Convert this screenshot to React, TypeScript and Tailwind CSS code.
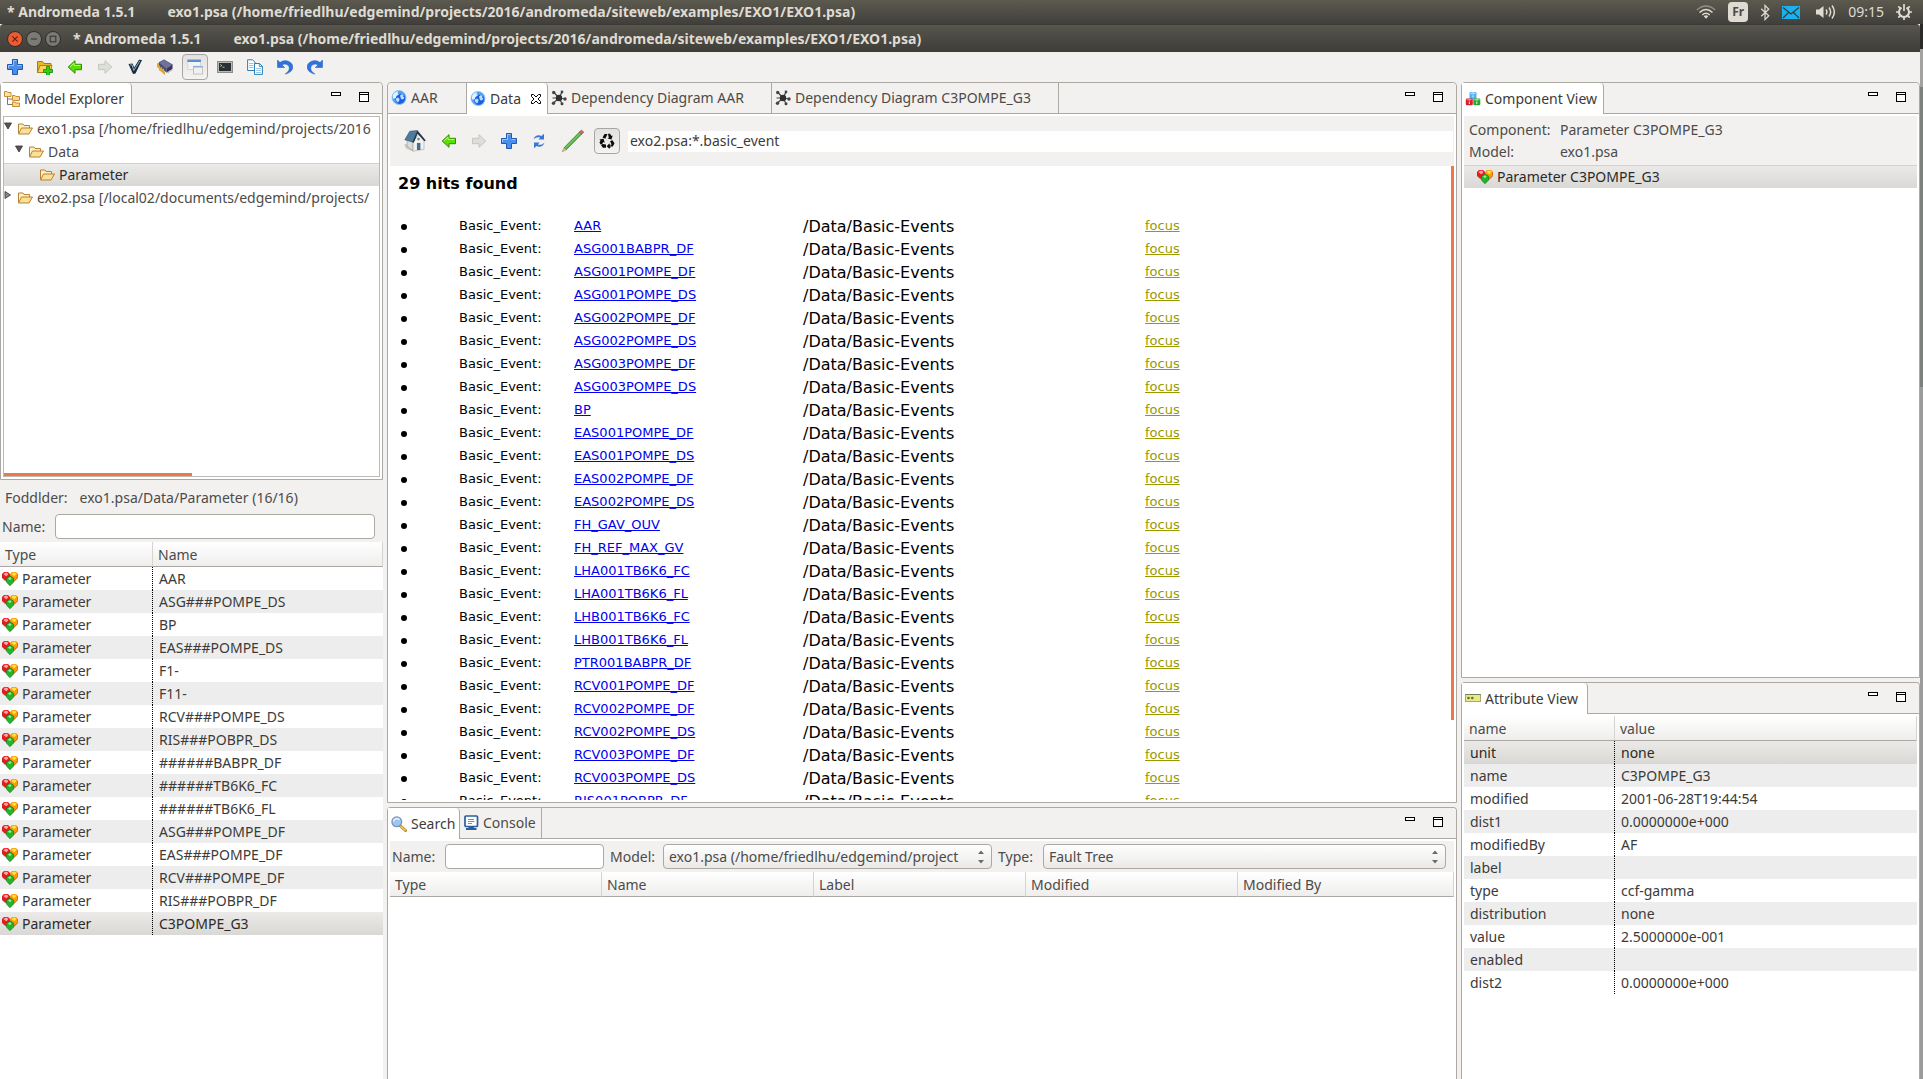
import type { ReactNode } from "react";
import clsx from "clsx";

const TITLE = "exo1.psa (/home/friedlhu/edgemind/projects/2016/andromeda/siteweb/examples/EXO1/EXO1.psa)";

const PARAMETERS = [
  "AAR",
  "ASG###POMPE_DS",
  "BP",
  "EAS###POMPE_DS",
  "F1-",
  "F11-",
  "RCV###POMPE_DS",
  "RIS###POBPR_DS",
  "######BABPR_DF",
  "######TB6K6_FC",
  "######TB6K6_FL",
  "ASG###POMPE_DF",
  "EAS###POMPE_DF",
  "RCV###POMPE_DF",
  "RIS###POBPR_DF",
  "C3POMPE_G3",
];

const HITS = [
  "AAR",
  "ASG001BABPR_DF",
  "ASG001POMPE_DF",
  "ASG001POMPE_DS",
  "ASG002POMPE_DF",
  "ASG002POMPE_DS",
  "ASG003POMPE_DF",
  "ASG003POMPE_DS",
  "BP",
  "EAS001POMPE_DF",
  "EAS001POMPE_DS",
  "EAS002POMPE_DF",
  "EAS002POMPE_DS",
  "FH_GAV_OUV",
  "FH_REF_MAX_GV",
  "LHA001TB6K6_FC",
  "LHA001TB6K6_FL",
  "LHB001TB6K6_FC",
  "LHB001TB6K6_FL",
  "PTR001BABPR_DF",
  "RCV001POMPE_DF",
  "RCV002POMPE_DF",
  "RCV002POMPE_DS",
  "RCV003POMPE_DF",
  "RCV003POMPE_DS",
  "RIS001POBPR_DF",
];

const ATTRIBUTES = [
  ["unit", "none"],
  ["name", "C3POMPE_G3"],
  ["modified", "2001-06-28T19:44:54"],
  ["dist1", "0.0000000e+000"],
  ["modifiedBy", "AF"],
  ["label", ""],
  ["type", "ccf-gamma"],
  ["distribution", "none"],
  ["value", "2.5000000e-001"],
  ["enabled", ""],
  ["dist2", "0.0000000e+000"],
];

const selectedFill = "bg-gradient-to-b from-[#ebeae8] to-[#dad8d5] text-[#2b2a28]";
const selectedRow = clsx("border-t border-[#d3d1ce]", selectedFill);

/* ---------- icons ---------- */

function Svg({ children, size = 16, className }: { children: ReactNode; size?: number; className?: string }) {
  return (
    <svg viewBox="0 0 16 16" width={size} height={size} className={clsx("block shrink-0", className)} aria-hidden>
      {children}
    </svg>
  );
}

function IconPlus() {
  return (
    <Svg>
      <path d="M5.5.5h5v5h5v5h-5v5h-5v-5h-5v-5h5z" fill="#4b8ee8" stroke="#1f57b5" />
      <path d="M6.5 6.5v-5h3M1.5 9V6.5h5M10.5 6.5h4" fill="none" stroke="#9cc4f7" />
    </Svg>
  );
}

function IconFolderPlus() {
  return (
    <Svg>
      <path d="M.5 13.500V2.500h5l1.500 2h7v9z" fill="#e9b62e" stroke="#a87a12" />
      <path d="M.5 13.500l2.500-7h12l-2 7z" fill="#f5d35c" stroke="#b0831a" />
      <path d="M9.500 7.500h3v3h3v3h-3v3h-3v-3h-3v-3h3z" fill="#2fd016" stroke="#128a06" strokeWidth=".8" />
    </Svg>
  );
}

function IconArrow({ disabled, right }: { disabled?: boolean; right?: boolean }) {
  return (
    <Svg className={clsx(right && "-scale-x-100")}>
      <path
        d="M1.200 8L8 1.700v3.600h6.500v5.400H8v3.600z"
        fill={disabled ? "#dcdfd8" : "#58e000"}
        stroke={disabled ? "#c3c7bf" : "#2c8a00"}
      />
      {!disabled && <path d="M3 7.800l4-3.700v2.300h6.500" fill="none" stroke="#b4ff6a" />}
    </Svg>
  );
}

function IconCheck() {
  return (
    <Svg>
      <path d="M1.500 5l4-.5 1.700 4L12 .8l3 .2-6.500 13.500L6 15z" fill="#1c2b38" />
      <path d="M3 5.800l2 .2 1.800 5.500L12.800 2" fill="none" stroke="#7fb3d9" />
    </Svg>
  );
}

function IconChip() {
  return (
    <Svg>
      <path d="M0 4.500l2-1v6l-2-1.500zM2 7l6 6v3l-5.500-5z" fill="#e0a535" />
      <path d="M2 3.500L7 .8l8.500 5-6 4z" fill="#7073a0" stroke="#3d4064" strokeWidth=".6" />
      <path d="M2 3.500v4l7.500 6V9.800z" fill="#484b70" />
      <path d="M9.500 9.800L15.500 5.800v4l-6 4z" fill="#34365a" />
      <path d="M2.500 6.500v5M4.500 8.200v4.800M6.500 9.800v4.800" stroke="#e0a535" strokeWidth="1.300" />
      <path d="M11.200 12.400v1.800M13 11.200v1.800M14.800 10v1.800" stroke="#9d9d9d" strokeWidth="1" />
    </Svg>
  );
}

function IconWindows() {
  return (
    <Svg>
      <rect x=".8" y="1" width="12.700" height="9.500" fill="#f3f4f3" stroke="#ccd0ce" strokeWidth=".8" />
      <rect x=".4" y=".6" width="13.500" height="2.400" fill="#5b8fd0" />
      <rect x="6.500" y="8" width="9" height="7" fill="#f0f1ee" stroke="#b5b9b3" strokeWidth=".8" />
      <path d="M6.200 7.600h9.600" stroke="#8fb0da" strokeWidth="1.400" />
    </Svg>
  );
}

function IconTerminal() {
  return (
    <Svg>
      <rect x=".5" y="2.500" width="15" height="11" fill="#b8b8b4" stroke="#8d8d89" />
      <rect x="2" y="4" width="12" height="8" fill="#2a2f33" />
      <path d="M3.300 5.500l1.500 1-1.500 1M5.500 8.200h2" fill="none" stroke="#e5e5e5" strokeWidth=".8" />
    </Svg>
  );
}

function IconCopy() {
  return (
    <Svg>
      <path d="M.6.8h5L8 3.200v8.300H.6z" fill="#fff" stroke="#2a7fb8" />
      <path d="M2 4.500h4.500M2 6.500h4.500M2 8.500h4.500" stroke="#7fb9dc" strokeWidth=".8" />
      <path d="M7.500 4.500h5l2.900 2.800v8.100H7.500z" fill="#fff" stroke="#2a7fb8" />
      <path d="M12.300 4.500v3h3" fill="none" stroke="#2a7fb8" strokeWidth=".8" />
      <path d="M9 9.500h5M9 11.500h5M9 13.500h5" stroke="#7fb9dc" strokeWidth=".8" />
    </Svg>
  );
}

function IconUndo({ flip }: { flip?: boolean }) {
  return (
    <Svg className={clsx(flip && "-scale-x-100")}>
      <path
        d="M.5 1v7.500h7.200L5 6c2.500-1.800 6-.8 7 1.800.9 2.600-.5 5-3.800 7.200C13.500 14 16 10.800 15.800 7.500 15.500 2.500 7.500-.5 3 3.600z"
        fill="#2f73dd"
        stroke="#1d56b4"
        strokeWidth=".5"
      />
    </Svg>
  );
}

function IconTree() {
  return (
    <Svg>
      <path d="M3.500 6v7.500h5M3.500 8h5" fill="none" stroke="#777" />
      <path d="M.5 5.500v-5h2.500l.8 1H7v4z" fill="#fbe3a2" stroke="#c0832a" strokeWidth=".9" />
      <path d="M8.500 9.500v-5H11l.8 1h3.700v4z" fill="#fbd98a" stroke="#c0832a" strokeWidth=".9" />
      <path d="M8.500 15.500v-4.500H11l.8 1h3.700v3.500z" fill="#fbd98a" stroke="#c0832a" strokeWidth=".9" />
    </Svg>
  );
}

function IconFolder() {
  return (
    <Svg>
      <path d="M1.500 12.500v-9.500h4.500l1 1.500h5.500v3" fill="#fdf0c4" stroke="#b9822f" />
      <path d="M1.500 13l3-6h11l-3.500 6z" fill="#fbe09a" stroke="#b9822f" strokeLinejoin="round" />
    </Svg>
  );
}

function IconGlobe() {
  return (
    <Svg>
      <circle cx="8" cy="7.500" r="7" fill="#4ea0f5" />
      <circle cx="9.500" cy="9" r="5.200" fill="#1a5fe0" />
      <path
        d="M1.800 5c.8-2 3-3.700 5.500-3.800L6.500 3l1.300 1.500L5.500 6l-.8 2.200L2 8.500z"
        fill="#e3f2ff"
      />
      <path d="M5 8.500l2-1 1.500 1.300-.3 2.200-1.400 1.500L5 10.500zM9 5.500l2-1.500 1.500 1-.5 1.500 1.500 1-1.500 2-2-.5z" fill="#b9dcff" />
      <circle cx="8" cy="7.500" r="7" fill="none" stroke="#8cc1f8" strokeWidth=".9" />
    </Svg>
  );
}

function IconGraph() {
  return (
    <Svg>
      <path d="M8 8L3 2.500M8 8l3-6M8 8l6 1M8 8l-5.500 5M8 8l3 5.500M8 8L1.500 8" stroke="#444" strokeWidth="1.200" />
      <circle cx="8" cy="8" r="3.200" fill="#2f2f2f" />
      <circle cx="2.700" cy="2.500" r="1.700" fill="#444" />
      <circle cx="11" cy="2" r="1.400" fill="#444" />
      <circle cx="14" cy="9" r="1.700" fill="#444" />
      <circle cx="2.500" cy="13.300" r="1.700" fill="#444" />
      <circle cx="11" cy="13.700" r="1.500" fill="#444" />
    </Svg>
  );
}

function IconClose() {
  return (
    <svg viewBox="0 0 10 10" width="10" height="10" className="block shrink-0" aria-hidden>
      <path
        d="M.5.5h2L5 3 7.500.500h2v2L7 5l2.500 2.500v2h-2L5 7 2.500 9.500h-2v-2L3 5 .5 2.500z"
        fill="#fff"
        stroke="#000"
      />
    </svg>
  );
}

function IconMaximize() {
  return (
    <svg viewBox="0 0 10 10" width="10" height="10" className="block" aria-hidden>
      <rect x=".5" y=".5" width="9" height="9" fill="#fff" stroke="#000" />
      <path d="M1 2.500h8" stroke="#000" />
    </svg>
  );
}

function IconHome() {
  return (
    <Svg size={24}>
      <path d="M.8 10.500l3-1.500 4 5.500-1 .5L2 13z" fill="#c9c9c4" />
      <path d="M2.700 7l4 1.500V14.500l-4-3z" fill="#dcdcd8" stroke="#8b8b86" strokeWidth=".3" />
      <path d="M6.700 8.500L10.700 3.500 14 8v5.500L6.700 14.800z" fill="#f2f2ef" stroke="#8b8b86" strokeWidth=".3" />
      <path d="M4.500 1.500L9.700 1 6.800 8.800 1.200 7.200z" fill="#4e7a9c" stroke="#34566f" strokeWidth=".4" />
      <path d="M9.700 1l5.500 6.700-.9.500-4.600-5-2.500 6-.9-.5z" fill="#23333f" />
      <rect x="9.300" y="9.300" width="2.300" height="4.700" fill="#3b6f95" />
      <circle cx="10.300" cy="6.700" r=".9" fill="#6d8b9d" />
    </Svg>
  );
}

function IconRefresh() {
  return (
    <Svg>
      <path d="M2.500 6.500C3.500 2.500 7.500 1.500 10.500 3L13 .8V6.500H7.500L9.200 4.600C6.800 3.700 4.500 4.300 2.500 6.500z" fill="#3a76d6" />
      <path d="M13.500 9.500c-1 4-5 5-8 3.500L3 15.200V9.500h5.500l-1.700 1.900c2.400.9 4.700.3 6.700-1.900z" fill="#3a76d6" />
    </Svg>
  );
}

function IconPencil() {
  return (
    <Svg size={24}>
      <path d="M2 12.500L12.500 1.800l1.500 1.400L3.500 13.800z" fill="#4fae3d" stroke="#2c6e20" strokeWidth=".4" />
      <path d="M2.700 13L13.200 2.500" stroke="#a3e58d" strokeWidth=".5" />
      <path d="M12.200 2.100L13.600.6l1.700 1.500-1.400 1.400z" fill="#d9606a" stroke="#9c3a42" strokeWidth=".3" />
      <path d="M2 12.500L.8 15.200l2.700-1.400z" fill="#e8cf95" stroke="#7a6432" strokeWidth=".3" />
    </Svg>
  );
}

function IconRecycle() {
  return (
    <Svg>
      <path d="M3.500 4.500L5.500 1h3L6.300 5.800z" fill="#0b0b0b" />
      <path d="M9 .8h2l1.500 2.300 1.200-.6L12.500 6.500 8.500 5.500l1.300-.8z" fill="#0b0b0b" />
      <path d="M13.200 7l2.300 3.200-1.700 3.300h-2.200L12.500 11 11 8.400z" fill="#0b0b0b" />
      <path d="M10.500 10.300v1.200h1v3.200h-1V16L7.700 13.200z" fill="#0b0b0b" />
      <path d="M7 11.500v3.300H3.800L2 12l1.500-1z" fill="#0b0b0b" />
      <path d="M.3 6.500L4.500 5.800l1.300 3.900-1.300-.6L3.300 10.800l-1.800.7L.5 9.600l1-2.200z" fill="#0b0b0b" />
    </Svg>
  );
}

/* three glossy gems that form a heart */
function Heart() {
  return (
    <Svg>
      <path d="M0 3L2 1h4l2 2v4L5 10 3 9.500 0 6.500z" fill="#f0181f" />
      <path d="M8 3l2-2h4l2 2v3.500L12 10.500 8 7.500z" fill="#ff9a0a" />
      <path d="M0 6.500L3 9.500M0 3v3.500M16 3v3.500L12 10.500" fill="none" stroke="#8c3a10" strokeWidth=".7" />
      <path d="M4.300 7.300L8 4.800l3.700 2.500v3.700L8 14.700 4.300 11z" fill="#22b52a" stroke="#14661a" strokeWidth=".6" />
      <path d="M1.500 3.200L3 1.800h2.300L6.300 3.500 4.300 5.300z" fill="#ffa3a3" />
      <path d="M9.700 3l1.200-1.300h2.400l1 1.500-2 2z" fill="#ffe63c" />
      <path d="M6 7.500l2-1.300 1.600 1L8 9.300z" fill="#94f394" />
    </Svg>
  );
}

function IconSearch() {
  return (
    <Svg>
      <path d="M9.500 10l5 4.500" stroke="#a8741c" strokeWidth="3" strokeLinecap="round" />
      <path d="M9.800 10.300l4.600 4" stroke="#f5c65a" strokeWidth="1.700" strokeLinecap="round" />
      <circle cx="5.800" cy="5.800" r="4.900" fill="#9cc6f0" stroke="#7d8fb8" strokeWidth="1.200" />
      <path d="M2.500 5.500a3.400 3.400 0 016-1.700" fill="none" stroke="#e8f4ff" strokeWidth="1.500" />
    </Svg>
  );
}

function IconConsole() {
  return (
    <Svg>
      <rect x="2" y="1" width="12.500" height="10.500" rx="1" fill="#fff" stroke="#2b5c9e" strokeWidth="1.700" />
      <path d="M5 4.500h6M5 6.500h6.500M5 8.500h4" stroke="#6383ad" strokeWidth=".9" />
      <path d="M6 12h4.500l1 1h2v2H3v-2h2z" fill="#2b5c9e" />
    </Svg>
  );
}

function IconBlocks() {
  return (
    <Svg>
      <rect x="4.500" y="1" width="7" height="7" rx="1.200" fill="#55aef0" />
      <path d="M4.500 2.500L8 1l3.500 1.500L8 3.500z" fill="#a8daff" />
      <rect x=".8" y="7.500" width="7" height="6.800" rx="1.200" fill="#d81e2c" />
      <path d="M.8 8.700l3.500-1.200 3.500 1.200-3.500 1z" fill="#f27c84" />
      <rect x="8.300" y="7.500" width="7" height="6.800" rx="1.200" fill="#2aa52e" />
      <path d="M8.300 8.700l3.500-1.200 3.500 1.200-3.500 1z" fill="#8ade8c" />
      <path d="M4.300 10.500v2.500M11.800 10.500v2.500M8 4.300v2" stroke="#fff" strokeWidth=".9" />
    </Svg>
  );
}

function IconAttribute() {
  return (
    <Svg>
      <rect x=".5" y="3.500" width="15" height="7" fill="#e9e98a" stroke="#a8a86a" />
      <path d="M.5 3.500h15" stroke="#6f7f5a" />
      <circle cx="3.500" cy="7" r="1.300" fill="#6b6b35" />
      <circle cx="7.300" cy="7" r="1.300" fill="#6b6b35" />
    </Svg>
  );
}

/* ---------- desktop chrome ---------- */

function Indicators() {
  return (
    <div className="flex items-center">
      <svg viewBox="0 0 20 14" width="20" height="14" className="mr-3" aria-hidden>
        <g fill="none" stroke="#dfdbd2" strokeWidth="1.600">
          <path d="M.8 5Q10-3 19.200 5" opacity=".45" />
          <path d="M3.500 7.500Q10 1.500 16.500 7.500" />
          <path d="M6.300 10Q10 6.500 13.700 10" />
        </g>
        <path d="M7.800 11.200Q10 9.500 12.200 11.200L10 13.700z" fill="#dfdbd2" />
      </svg>
      <span className="mr-3 flex h-5 w-5 items-center justify-center rounded-sm bg-[#dfdbd2] text-xs font-bold text-[#4b4a45]">
        Fr
      </span>
      <svg viewBox="0 0 10 18" width="10" height="17" className="mr-3" aria-hidden>
        <path d="M1 5l8 7.500L5 16.500v-15L9 5.500 1 13" fill="none" stroke="#dfdbd2" strokeWidth="1.300" />
      </svg>
      <svg viewBox="0 0 18 13" width="18" height="13" className="mr-4" aria-hidden>
        <rect width="18" height="13" fill="#19b1ee" />
        <path d="M1 1.500l8 6.500 8-6.500M1 12l5.500-5.500M17 12l-5.500-5.500" fill="none" stroke="#3c3b37" strokeWidth="1.200" />
      </svg>
      <svg viewBox="0 0 20 16" width="20" height="16" className="mr-3" aria-hidden>
        <path d="M0 5.500h3L7.500 2v12L3 10.500H0z" fill="#dfdbd2" />
        <path d="M10 5.500q1.800 2.500 0 5M13 3.500q3.300 4.500 0 9M16 1.500q4.800 6.500 0 13" fill="none" stroke="#dfdbd2" strokeWidth="1.500" />
      </svg>
      <span className="mr-3 text-sm text-[#dfdbd2]">09:15</span>
      <svg viewBox="0 0 16 16" width="16" height="16" aria-hidden>
        <path d="M5.500 3.700a5 5 0 105 0" fill="none" stroke="#dfdbd2" strokeWidth="2" />
        <path
          d="M8 0v7M0 8h3M13 8h3M8 13v3M2.300 2.300l2 2M13.700 2.300l-2 2M2.300 13.700l2-2M13.700 13.700l-2-2"
          stroke="#dfdbd2"
          strokeWidth="1.700"
        />
      </svg>
    </div>
  );
}

function WindowTitle() {
  return (
    <div className="flex gap-8 text-sm font-bold whitespace-nowrap text-[#dfdbd2]">
      <span>* Andromeda 1.5.1</span>
      <span>{TITLE}</span>
    </div>
  );
}

function TopPanel() {
  return (
    <div className="flex h-6 shrink-0 items-center justify-between bg-gradient-to-b from-[#5c5a4f] to-[#403f3b] pr-[11px] pl-[7px]">
      <WindowTitle />
      <Indicators />
    </div>
  );
}

function TitleBar() {
  return (
    <div className="flex h-7 shrink-0 items-center gap-3 rounded-t border-t border-[#3a3934] bg-gradient-to-b from-[#57554c] to-[#3e3d39] pl-[7px]">
      <div className="flex gap-[3px]">
        <button aria-label="Close" className="h-4 w-4 rounded-full border border-[#2f2e2b] bg-[#ec5a32]">
          <Svg size={14}>
            <path d="M5 5l6 6M11 5l-6 6" stroke="#5c2413" strokeWidth="1.300" />
          </Svg>
        </button>
        <button aria-label="Minimize" className="h-4 w-4 rounded-full border border-[#2f2e2b] bg-[#7b7a73]">
          <Svg size={14}>
            <path d="M4.500 8h7" stroke="#3a3935" strokeWidth="1.300" />
          </Svg>
        </button>
        <button aria-label="Maximize" className="h-4 w-4 rounded-full border border-[#2f2e2b] bg-[#7b7a73]">
          <Svg size={14}>
            <rect x="4.800" y="4.800" width="6.400" height="6.400" fill="none" stroke="#3a3935" strokeWidth="1.300" />
          </Svg>
        </button>
      </div>
      <WindowTitle />
    </div>
  );
}

function ToolButton({ label, pressed, children }: { label: string; pressed?: boolean; children: ReactNode }) {
  return (
    <button
      aria-label={label}
      className={clsx(
        "flex h-[26px] w-[26px] shrink-0 items-center justify-center rounded",
        pressed && "border border-[#a9a6a1] bg-gradient-to-b from-[#e3e1df] to-[#f4f3f2]",
      )}
    >
      {children}
    </button>
  );
}

function MainToolbar() {
  return (
    <div className="flex h-[30px] shrink-0 items-center gap-1 pl-[2px]">
      <ToolButton label="New"><IconPlus /></ToolButton>
      <ToolButton label="Add project"><IconFolderPlus /></ToolButton>
      <ToolButton label="Back"><IconArrow /></ToolButton>
      <ToolButton label="Forward"><IconArrow right disabled /></ToolButton>
      <ToolButton label="Validate"><IconCheck /></ToolButton>
      <ToolButton label="Compute"><IconChip /></ToolButton>
      <ToolButton label="Windows" pressed><IconWindows /></ToolButton>
      <ToolButton label="Terminal"><IconTerminal /></ToolButton>
      <ToolButton label="Copy"><IconCopy /></ToolButton>
      <ToolButton label="Undo"><IconUndo /></ToolButton>
      <ToolButton label="Redo"><IconUndo flip /></ToolButton>
    </div>
  );
}

/* ---------- panes ---------- */

type TabProps = { icon: ReactNode; label: string; active?: boolean; closable?: boolean; className?: string };

function Tab({ icon, label, active, closable, className }: TabProps) {
  return (
    <button
      className={clsx(
        "flex shrink-0 items-center gap-1 border-r border-[#aca9a4] pl-[3px] whitespace-nowrap",
        active ? "rounded-tr bg-white text-[#3c3b39]" : "border-b",
        className,
      )}
    >
      {icon}
      <span>{label}</span>
      {closable && (
        <span className="ml-auto pr-[6px]">
          <IconClose />
        </span>
      )}
    </button>
  );
}

function Pane({ tabs, className, children }: { tabs: TabProps[]; className?: string; children: ReactNode }) {
  return (
    <section className={clsx("flex min-h-0 flex-col rounded-t border border-[#aca9a4] bg-white", className)}>
      <div className="flex h-[31px] shrink-0 rounded-t bg-[#f2f1f0]">
        {tabs.map((tab) => (
          <Tab key={tab.label} {...tab} />
        ))}
        <div className="flex flex-1 items-start justify-end gap-[18px] border-b border-[#aca9a4] pt-[9px] pr-[13px]">
          <button aria-label="Minimize" className="h-1 w-[10px] border border-black bg-white" />
          <button aria-label="Maximize">
            <IconMaximize />
          </button>
        </div>
      </div>
      <div className="flex min-h-0 flex-1 flex-col p-[2px]">{children}</div>
    </section>
  );
}

function Th({ children, className }: { children: ReactNode; className?: string }) {
  return (
    <th
      className={clsx(
        "h-[25px] border-r border-b border-r-[#d6d3d0] border-b-[#aca9a4] bg-gradient-to-b from-white to-[#efeeed] p-0 pt-px pl-[5px] text-left font-normal",
        className,
      )}
    >
      {children}
    </th>
  );
}

function TreeRow({
  label,
  className,
  arrow,
  selected,
}: {
  label: string;
  className?: string;
  arrow?: "open" | "closed";
  selected?: boolean;
}) {
  return (
    <li className={clsx("flex h-[23px] items-center whitespace-nowrap", className, selected && selectedRow)}>
      <svg viewBox="0 0 8 8" width="8" height="8" className="mt-[5px] mr-[5px] block shrink-0 self-start" aria-hidden>
        {arrow === "open" && <path d="M.5 1h7L4 7z" fill="#555" stroke="#333" strokeWidth=".8" />}
        {arrow === "closed" && <path d="M1 .5v7L6.500 4z" fill="#888" stroke="#333" strokeWidth=".8" />}
      </svg>
      <IconFolder />
      <span className="pl-1">{label}</span>
    </li>
  );
}

function ModelExplorer() {
  return (
    <Pane className="flex-1" tabs={[{ icon: <IconTree />, label: "Model Explorer", active: true, className: "w-[131px]" }]}>
      <div className="relative flex-1 overflow-hidden border border-[#bdbab6]">
        <ul>
          <TreeRow label="exo1.psa [/home/friedlhu/edgemind/projects/2016" arrow="open" />
          <TreeRow label="Data" arrow="open" className="pl-[11px]" />
          <TreeRow label="Parameter" selected className="pl-[22px]" />
          <TreeRow label="exo2.psa [/local02/documents/edgemind/projects/" arrow="closed" />
        </ul>
        <div className="absolute bottom-0 left-0 h-[3px] w-1/2 bg-[#ef7748]" />
      </div>
    </Pane>
  );
}

function ParameterList() {
  return (
    <div className="flex h-[599px] shrink-0 flex-col">
      <p className="h-[34px] pt-2 pl-[5px]">
        Foddlder:<span className="pl-3">exo1.psa/Data/Parameter (16/16)</span>
      </p>
      <div className="flex h-[25px] items-center pr-2">
        <label htmlFor="parameter-name" className="w-[55px] shrink-0 pl-[2px]">Name:</label>
        <input id="parameter-name" className="h-[25px] min-w-0 flex-1 rounded border border-[#aca9a4] bg-white px-2" />
      </div>
      <div className="mt-[3px] flex-1 bg-white">
        <table className="w-full table-fixed border-separate border-spacing-0">
          <thead>
            <tr>
              <Th className="w-[153px]">Type</Th>
              <Th>Name</Th>
            </tr>
          </thead>
          <tbody className="text-[#3c3b39]">
            {PARAMETERS.map((name, i) => {
              const last = i === PARAMETERS.length - 1;
              return (
                <tr key={name} className={clsx(last ? selectedFill : i % 2 === 1 && "bg-[#ededed]")}>
                  <td className="h-[23px] border-r border-dotted border-black p-0 pl-[2px]">
                    <div className="flex items-center gap-1">
                      <Heart />
                      Parameter
                    </div>
                  </td>
                  <td className="h-[23px] p-0 pl-[6px]">{name}</td>
                </tr>
              );
            })}
          </tbody>
        </table>
      </div>
    </div>
  );
}

function BrowserToolbar() {
  return (
    <div className="flex h-[50px] shrink-0 items-center gap-2 bg-[#f2f1f0] pr-px pl-3">
      <ToolButton label="Home"><IconHome /></ToolButton>
      <div className="flex gap-1">
        <ToolButton label="Back"><IconArrow /></ToolButton>
        <ToolButton label="Forward"><IconArrow right disabled /></ToolButton>
        <ToolButton label="Add"><IconPlus /></ToolButton>
        <ToolButton label="Refresh"><IconRefresh /></ToolButton>
      </div>
      <ToolButton label="Edit"><IconPencil /></ToolButton>
      <ToolButton label="Recycle" pressed><IconRecycle /></ToolButton>
      <input
        aria-label="Query"
        defaultValue="exo2.psa:*.basic_event"
        className="h-[21px] min-w-0 flex-1 bg-white pb-[2px] pl-[2px] text-[#3c3b39]"
      />
    </div>
  );
}

function HitList() {
  return (
    <div className="relative min-h-0 flex-1 overflow-hidden pl-2 font-['DejaVu_Sans',sans-serif] text-black">
      <h1 className="pt-[6px] text-base font-bold">29 hits found</h1>
      <table className="mt-[19px] w-full table-fixed border-separate border-spacing-0 text-[13px]">
        <tbody>
          {HITS.map((hit) => (
            <tr key={hit}>
              <td className="h-[23px] w-[61px] p-0 pl-[3px]">
                <span className="block h-[6px] w-[6px] rounded-full bg-black" />
              </td>
              <td className="w-[115px] p-0">Basic_Event:</td>
              <td className="w-[229px] p-0">
                <a href="#hit" className="text-[#0000ee] underline">{hit}</a>
              </td>
              <td className="w-[342px] p-0 text-base leading-5">/Data/Basic-Events</td>
              <td className="p-0">
                <a href="#focus" className="text-[#999900] underline">focus</a>
              </td>
            </tr>
          ))}
        </tbody>
      </table>
      <div className="absolute top-0 right-0 h-[554px] w-[3px] bg-[#ef7748]" />
    </div>
  );
}

function Combo({ id, value, className }: { id: string; value: string; className: string }) {
  return (
    <div className={clsx("relative", className)}>
      <select
        id={id}
        className="block h-[25px] w-full appearance-none rounded border border-[#aca9a4] bg-gradient-to-b from-white to-[#eae9e7] pr-5 pl-[5px]"
      >
        <option>{value}</option>
      </select>
      <svg viewBox="0 0 6 14" width="6" height="14" className="pointer-events-none absolute top-[6px] right-2" aria-hidden>
        <path d="M0 4l3-3.500L6 4zM0 10l3 3.500L6 10z" fill="#6d6b68" />
      </svg>
    </div>
  );
}

function SearchPane() {
  return (
    <Pane
      className="h-[272px] shrink-0 border-b-0"
      tabs={[
        { icon: <IconSearch />, label: "Search", active: true, className: "w-[72px]" },
        { icon: <IconConsole />, label: "Console", className: "w-[82px]" },
      ]}
    >
      <div className="flex h-[31px] shrink-0 items-center bg-[#f2f1f0] pr-2 pl-[2px]">
        <label htmlFor="search-name" className="w-[53px]">Name:</label>
        <input id="search-name" className="h-[25px] w-[159px] rounded border border-[#aca9a4] bg-white px-2" />
        <label htmlFor="search-model" className="w-[59px] pl-[6px]">Model:</label>
        <Combo id="search-model" value="exo1.psa (/home/friedlhu/edgemind/project" className="w-[329px]" />
        <label htmlFor="search-type" className="w-[51px] pl-[6px]">Type:</label>
        <Combo id="search-type" value="Fault Tree" className="flex-1" />
      </div>
      <table className="w-full table-fixed border-separate border-spacing-0">
        <thead>
          <tr>
            <Th className="w-[212px]">Type</Th>
            <Th className="w-[212px]">Name</Th>
            <Th className="w-[212px]">Label</Th>
            <Th className="w-[212px]">Modified</Th>
            <Th>Modified By</Th>
          </tr>
        </thead>
      </table>
    </Pane>
  );
}

function ComponentView() {
  return (
    <Pane className="flex-1" tabs={[{ icon: <IconBlocks />, label: "Component View", active: true, className: "w-[142px]" }]}>
      <dl className="grid h-[49px] shrink-0 grid-cols-[91px_1fr] content-center gap-y-[2px] bg-[#f2f1f0] pl-[5px]">
        <dt>Component:</dt>
        <dd>Parameter C3POMPE_G3</dd>
        <dt>Model:</dt>
        <dd>exo1.psa</dd>
      </dl>
      <div className={clsx("flex h-[23px] shrink-0 items-center gap-1 pl-[13px]", selectedRow)}>
        <Heart />
        Parameter C3POMPE_G3
      </div>
    </Pane>
  );
}

function AttributeView() {
  return (
    <Pane
      className="h-[397px] shrink-0 border-b-0"
      tabs={[{ icon: <IconAttribute />, label: "Attribute View", active: true, className: "w-[126px]" }]}
    >
      <table className="w-full table-fixed border-separate border-spacing-0">
        <thead>
          <tr>
            <Th className="w-[151px]">name</Th>
            <Th>value</Th>
          </tr>
        </thead>
        <tbody className="text-[#3c3b39]">
          {ATTRIBUTES.map(([name, value], i) => (
            <tr key={name} className={clsx(i === 0 ? selectedFill : i % 2 === 1 && "bg-[#ededed]")}>
              <td className="h-[23px] border-r border-dotted border-black p-0 pl-[6px]">{name}</td>
              <td className="h-[23px] p-0 pl-[6px]">{value}</td>
            </tr>
          ))}
        </tbody>
      </table>
    </Pane>
  );
}

export default function App() {
  return (
    <div className="flex h-screen flex-col overflow-hidden bg-[#3a3934] font-['Noto_Sans',sans-serif] text-sm text-[#4c4b49]">
      <TopPanel />
      <div className="flex min-h-0 flex-1">
        <div className="flex min-w-0 flex-1 flex-col bg-[#f2f1f0]">
          <TitleBar />
          <MainToolbar />
          <div className="flex min-h-0 flex-1 gap-1">
            <div className="flex w-[383px] shrink-0 flex-col">
              <ModelExplorer />
              <ParameterList />
            </div>
            <div className="flex min-w-0 flex-1 flex-col gap-1">
              <Pane
                className="flex-1"
                tabs={[
                  { icon: <IconGlobe />, label: "AAR", className: "w-[79px]" },
                  { icon: <IconGlobe />, label: "Data", active: true, closable: true, className: "w-[81px]" },
                  { icon: <IconGraph />, label: "Dependency Diagram AAR", className: "w-[224px]" },
                  { icon: <IconGraph />, label: "Dependency Diagram C3POMPE_G3", className: "w-[287px]" },
                ]}
              >
                <BrowserToolbar />
                <HitList />
              </Pane>
              <SearchPane />
            </div>
            <div className="flex w-[459px] shrink-0 flex-col gap-1">
              <ComponentView />
              <AttributeView />
            </div>
          </div>
        </div>
        {/* sliver of the window behind */}
        <div className="flex w-[3px] shrink-0 flex-col">
          <div className="h-[25px] bg-[#2b2a28]" />
          <div className="h-[38px] bg-[#a3a2a0]" />
          <div className="h-[300px] bg-[#7d817e]" />
          <div className="flex-1 bg-[#9b9b9b]" />
        </div>
      </div>
    </div>
  );
}
